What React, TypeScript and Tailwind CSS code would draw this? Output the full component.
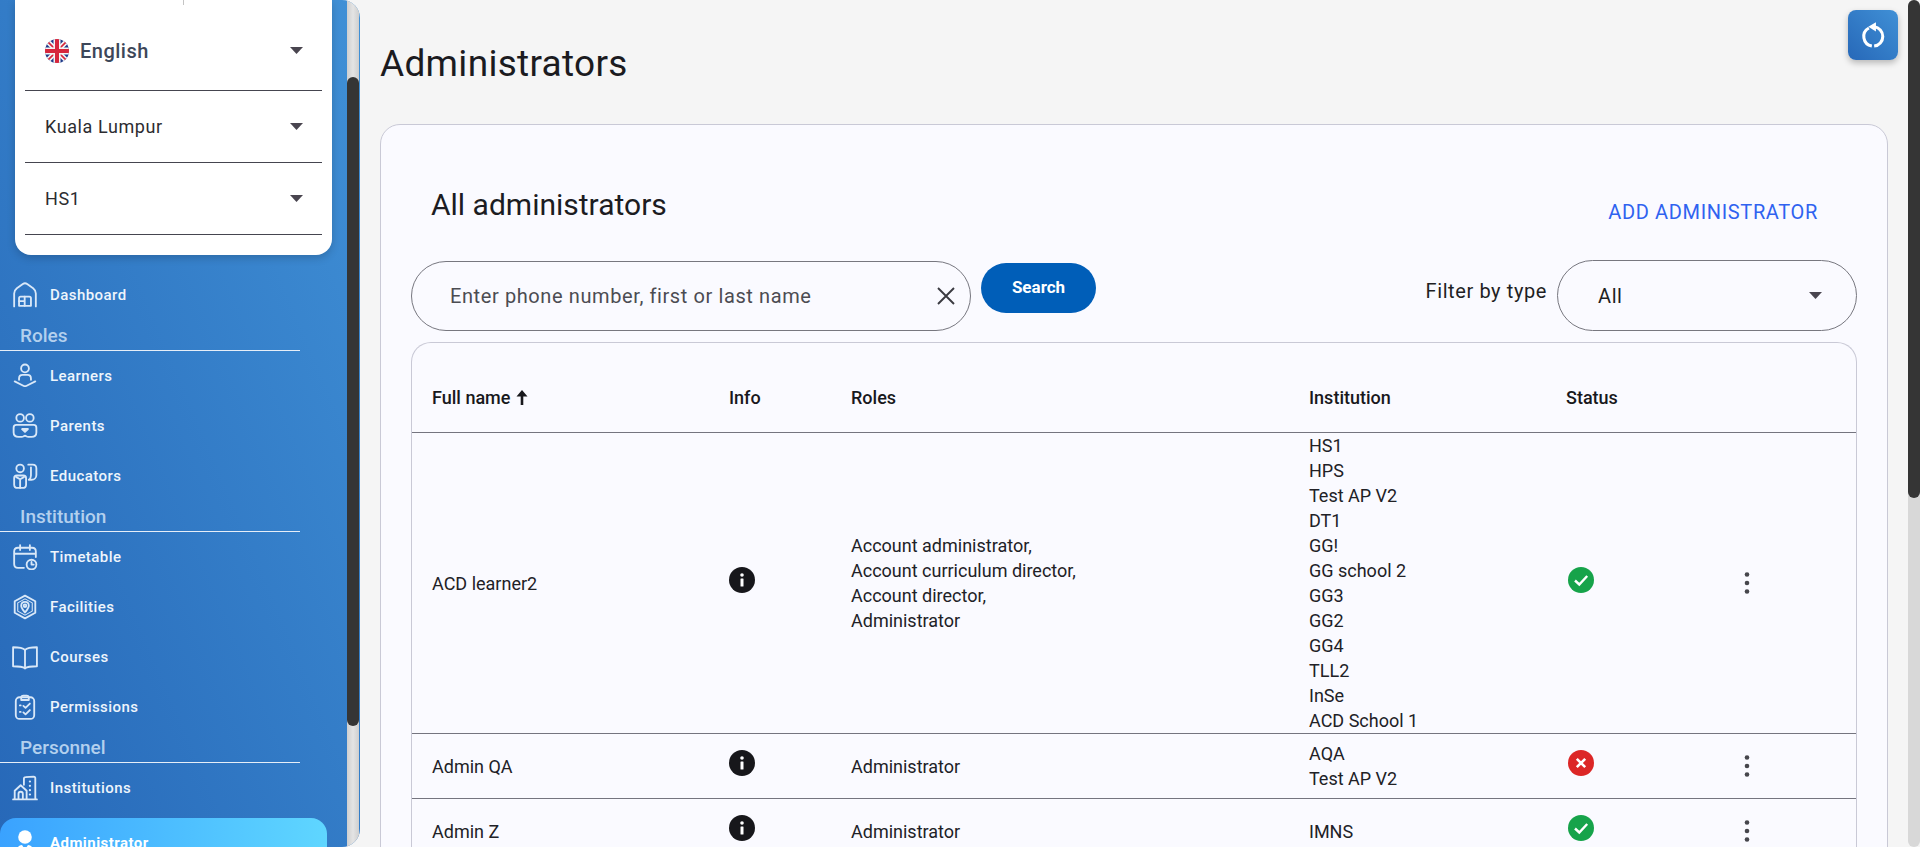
import type { ReactNode } from 'react';

const font = 'font-["Roboto",sans-serif]';

function Icon({ children }: { children: ReactNode }) {
  return (
    <svg
      viewBox="0 0 24 24"
      className="w-[26px] h-[26px] shrink-0"
      fill="none"
      stroke="#d9e8f8"
      strokeWidth="1.7"
      strokeLinecap="round"
      strokeLinejoin="round"
    >
      {children}
    </svg>
  );
}

const icons: Record<string, ReactNode> = {
  Dashboard: (
    <>
      <path d="M2 22.5V10.5C2 8.5 3 7 4.5 5.8L10 1.8C11.2 1 12.8 1 14 1.8L19.5 5.8C21 7 22 8.5 22 10.5V22.5" />
      <path d="M6.5 22V15C6.5 14 7 13.5 8 13.5H16C17 13.5 17.5 14 17.5 15V22H6.5Z" />
      <path d="M11.7 13.5V22M6.5 17.7H11.7" />
    </>
  ),
  Learners: (
    <>
      <circle cx="12" cy="5" r="3.6" />
      <path d="M6.5 15.5V14.2C6.5 12.2 8 11 9.8 11H14.2C16 11 17.5 12.2 17.5 14.2V15.5" />
      <path d="M2.5 17L10.5 21C11.5 21.5 12.5 21.5 13.5 21L21.5 17" />
    </>
  ),
  Parents: (
    <>
      <circle cx="7.5" cy="4.5" r="3.5" />
      <circle cx="16.5" cy="4.5" r="3.5" />
      <path d="M4 11H20C21.5 11 22.5 12 22.5 13.5V18C22.5 20.5 20.5 22 18 22H15C13.5 22 13 21 12 21C11 21 10.5 22 9 22H6C3.5 22 1.5 20.5 1.5 18V13.5C1.5 12 2.5 11 4 11Z" />
      <path d="M12 17.5L9.3 14.8H14.7L12 17.5Z" fill="#d9e8f8" />
    </>
  ),
  Educators: (
    <>
      <circle cx="7.5" cy="5" r="3.5" />
      <path d="M2 14C2 12.5 3 11.5 4.5 11.5H10.5C12 11.5 13 12.5 13 14V20C13 22 11.5 23 9.5 23H5.5C3.5 23 2 22 2 20V14Z" />
      <path d="M7.5 15V23M4 13L7.5 15L11 13" />
      <path d="M15 1.5H19C21 1.5 22.5 3 22.5 5V11C22.5 13.5 20.5 15.5 18 15.5H15.5C17 14.5 17.5 13 17.5 11.5V4" />
    </>
  ),
  Timetable: (
    <>
      <path d="M11 22H5.5C3.5 22 2 20.5 2 18.5V7C2 5 3.5 3.5 5.5 3.5H18.5C20.5 3.5 22 5 22 7V12" />
      <path d="M2.5 9H21.5M7.5 1V5.5M16.5 1V5.5" />
      <circle cx="18" cy="19" r="4.5" />
      <path d="M18 16.5V19H20" />
    </>
  ),
  Facilities: (
    <>
      <path d="M12 1.5L21.5 6.7V17.3L12 22.5L2.5 17.3V6.7L12 1.5Z" />
      <path d="M12 4.5L18.7 8.2V15.8L12 19.5L5.3 15.8V8.2L12 4.5Z" strokeWidth="1" />
      <path d="M12 17C10 14.5 8.5 12.8 8.5 10.8C8.5 8.8 10 7.3 12 7.3C14 7.3 15.5 8.8 15.5 10.8C15.5 12.8 14 14.5 12 17Z" />
      <circle cx="12" cy="10.8" r="1.2" />
    </>
  ),
  Courses: (
    <>
      <path d="M12 5.5C10 3.5 7.5 3 1 3V20.5C7.5 20.5 10 21 12 22.5C14 21 16.5 20.5 23 20.5V3C16.5 3 14 3.5 12 5.5Z" />
      <path d="M12 5.5V22.5" />
    </>
  ),
  Permissions: (
    <>
      <rect x="3.5" y="3" width="17" height="20" rx="3.5" />
      <path d="M8.5 5.5V3.5C8.5 2.3 9.3 1.5 10.5 1.5H13.5C14.7 1.5 15.5 2.3 15.5 3.5V5.5H8.5Z" />
      <path d="M7.3 10.5H8M7.3 16.5H8M10.5 11L12.5 12.8L16.5 8.8M10.5 17L12.5 18.8L16.5 14.8" />
    </>
  ),
  Institutions: (
    <>
      <path d="M11 9V3.5C11 2.5 11.8 2 12.5 2L20 1.5C21 1.5 21.5 2.2 21.5 3V22" />
      <path d="M2.5 22V14.5L8 9.5L13.5 14.5V22" />
      <path d="M6 22V17.5C6 16.3 7 15.5 8 15.5C9 15.5 10 16.3 10 17.5V22" />
      <path d="M1 22.5H23" />
      <path d="M16.5 6H16.6M16.5 10H16.6M16.5 14H16.6M16.5 18H16.6" strokeWidth="2" />
    </>
  ),
};

function Caret() {
  return (
    <svg viewBox="0 0 13 7" className="w-[13px] h-[7px] shrink-0" fill="#49454f">
      <path d="M0 0H13L6.5 7Z" />
    </svg>
  );
}

function UkFlag() {
  return (
    <svg viewBox="0 0 24 24" className="w-[24px] h-[24px] shrink-0 rounded-full">
      <rect width="24" height="24" fill="#1f3a8a" />
      <path d="M0 0L24 24M24 0L0 24" stroke="#f4f4f4" strokeWidth="5" />
      <path d="M0 0L24 24M24 0L0 24" stroke="#d6263c" strokeWidth="1.6" />
      <path d="M12 0V24M0 12H24" stroke="#f4f4f4" strokeWidth="7" />
      <path d="M12 0V24M0 12H24" stroke="#d6263c" strokeWidth="4" />
    </svg>
  );
}

function NavItem({ label }: { label: string }) {
  return (
    <div className="h-[50px] flex items-center">
      <div className="w-[50px] flex justify-center pr-[1px]">
        <Icon>{icons[label]}</Icon>
      </div>
      <span className="text-[15px] font-medium tracking-[0.45px] text-[#eef5fc]">{label}</span>
    </div>
  );
}

function NavHeading({ label }: { label: string }) {
  return (
    <div className="h-[31px] w-[300px] border-b border-[#e6eef8] pl-[20px] flex items-center text-[19px] font-medium leading-none text-[#b3d0ee]">
      {label}
    </div>
  );
}

function SidebarSelect({ label, first, flag }: { label: string; first?: boolean; flag?: boolean }) {
  return (
    <div
      className={`${first ? 'h-[91px] pt-[11px]' : 'h-[72px]'} mx-[10px] pl-[20px] pr-[19px] border-b border-[#45454f] flex items-center justify-between`}
    >
      <div className="flex items-center gap-[11px]">
        {flag && <UkFlag />}
        <span
          className={
            flag
              ? 'text-[20px] font-medium tracking-[0.5px] text-[#3d4759]'
              : 'text-[18px] tracking-[0.6px] text-[#2c2c30]'
          }
        >
          {label}
        </span>
      </div>
      <Caret />
    </div>
  );
}

function Sidebar() {
  return (
    <aside className="w-[360px] h-full shrink-0 flex rounded-r-[18px] overflow-hidden bg-linear-to-bl from-[#4090d6] to-[#2768b8]">
      <div className="w-[347px] shrink-0 h-full overflow-hidden">
        <div className="ml-[15px] w-[317px] h-[255px] bg-white rounded-b-[16px] shadow-[0_3px_8px_rgba(0,0,0,0.18)]">
          <div className="h-0 flex justify-center">
            <div className="w-px h-[5px] bg-[#c4c4c4] shrink-0 ml-[20px]" />
          </div>
          <SidebarSelect label="English" first flag />
          <SidebarSelect label="Kuala Lumpur" />
          <SidebarSelect label="HS1" />
        </div>
        <div className="mt-[15px]">
          <NavItem label="Dashboard" />
          <NavHeading label="Roles" />
          <NavItem label="Learners" />
          <NavItem label="Parents" />
          <NavItem label="Educators" />
          <NavHeading label="Institution" />
          <NavItem label="Timetable" />
          <NavItem label="Facilities" />
          <NavItem label="Courses" />
          <NavItem label="Permissions" />
          <NavHeading label="Personnel" />
          <NavItem label="Institutions" />
          <div className="mt-[5px] w-[327px] h-[50px] rounded-[16px] flex items-center bg-linear-to-r from-[#3aa2ff] to-[#5fd6ff]">
            <div className="w-[50px] flex justify-center">
              <svg viewBox="0 0 26 26" className="w-[26px] h-[26px]" fill="#fff">
                <circle cx="13" cy="7" r="6.8" />
                <path d="M3 26C3 20 6 15 10 15L12 18L11 26ZM23 26C23 20 20 15 16 15L14 18L15 26Z" />
              </svg>
            </div>
            <span className="text-[15px] font-bold tracking-[0.45px] text-white">Administrator</span>
          </div>
        </div>
      </div>
      <div className="w-[12px] h-full flex flex-col bg-linear-to-r from-[#cfcfcf] via-[#e4e4e4] to-[#cfcfcf] rounded-r-[16px]">
        <div className="h-[77px] shrink-0" />
        <div className="h-[649px] shrink-0 bg-[#353535] rounded-[6px]" />
      </div>
    </aside>
  );
}

type Row = {
  name: string;
  roles: string[];
  institutions: string[];
  active: boolean;
  className: string;
};

const rows: Row[] = [
  {
    name: 'ACD learner2',
    roles: ['Account administrator,', 'Account curriculum director,', 'Account director,', 'Administrator'],
    institutions: ['HS1', 'HPS', 'Test AP V2', 'DT1', 'GG!', 'GG school 2', 'GG3', 'GG2', 'GG4', 'TLL2', 'InSe', 'ACD School 1'],
    active: true,
    className: 'h-[301px]',
  },
  {
    name: 'Admin QA',
    roles: ['Administrator'],
    institutions: ['AQA', 'Test AP V2'],
    active: false,
    className: 'h-[65px]',
  },
  {
    name: 'Admin Z',
    roles: ['Administrator'],
    institutions: ['IMNS'],
    active: true,
    className: 'h-[65px]',
  },
];

const gridCols = 'grid grid-cols-[317px_122px_458px_257px_170px_1fr]';

function InfoIcon() {
  return (
    <svg viewBox="0 0 26 26" className="w-[26px] h-[26px] mb-[7px]">
      <circle cx="13" cy="13" r="13" fill="#17171b" />
      <rect x="11.5" y="11.5" width="3" height="8" rx="0.5" fill="#fff" />
      <circle cx="13" cy="8" r="1.8" fill="#fff" />
    </svg>
  );
}

function StatusIcon({ active }: { active: boolean }) {
  return (
    <svg viewBox="0 0 26 26" className="w-[26px] h-[26px] mb-[7px] ml-[2px]">
      <circle cx="13" cy="13" r="13" fill={active ? '#16a34a' : '#dc2626'} />
      {active ? (
        <path d="M7 13.5L11.3 17.5L19.2 9" fill="none" stroke="#fff" strokeWidth="2.4" />
      ) : (
        <path d="M8.8 8.8L17.2 17.2M17.2 8.8L8.8 17.2" fill="none" stroke="#fff" strokeWidth="2.6" />
      )}
    </svg>
  );
}

function Kebab() {
  return (
    <svg viewBox="0 0 22 26" className="w-[22px] h-[26px]" fill="#46464c">
      <circle cx="11" cy="4.5" r="2.3" />
      <circle cx="11" cy="13" r="2.3" />
      <circle cx="11" cy="21.5" r="2.3" />
    </svg>
  );
}

function Table() {
  return (
    <div className="mt-[11px] border border-b-0 border-[#c9c9d6] rounded-t-[20px]">
      <div className={`${gridCols} h-[90px] items-center pt-[20px] border-b border-[#74747f] text-[18px] font-medium text-[#18181c]`}>
        <div className="pl-[20px] flex items-center gap-[6px]">
          Full name
          <svg viewBox="0 0 12 15" className="w-[12px] h-[15px]" fill="#18181c">
            <path d="M6 0L11.5 6.5H7.3V15H4.7V6.5H0.5Z" />
          </svg>
        </div>
        <div>Info</div>
        <div>Roles</div>
        <div>Institution</div>
        <div>Status</div>
      </div>
      {rows.map((row) => (
        <div
          key={row.name}
          className={`${gridCols} ${row.className} items-center border-b border-[#74747f] text-[18px] leading-[25px] text-[#212126]`}
        >
          <div className="pl-[20px]">{row.name}</div>
          <InfoIcon />
          <div className={row.roles.length > 1 ? 'mb-[1px]' : ''}>
            {row.roles.map((role) => (
              <div key={role}>{role}</div>
            ))}
          </div>
          <div>
            {row.institutions.map((inst) => (
              <div key={inst}>{inst}</div>
            ))}
          </div>
          <StatusIcon active={row.active} />
          <Kebab />
        </div>
      ))}
    </div>
  );
}

export default function App() {
  return (
    <div className={`${font} h-[847px] w-full overflow-hidden flex bg-[#f5f5f5]`}>
      <Sidebar />
      <main className="flex-1 min-w-0 h-full pl-[20px] pr-[10px] overflow-hidden">
        <header className="h-[124px] flex items-start justify-between">
          <h1 className="mt-[44px] text-[37px] tracking-[0.3px] leading-[40px] text-[#1b1b1f]">Administrators</h1>
          <button className="mt-[10px] w-[50px] h-[50px] rounded-[8px] flex items-center justify-center bg-linear-to-bl from-[#4090d6] to-[#2768b8] shadow-[0_3px_6px_rgba(0,0,0,0.25)]">
            <svg viewBox="0 0 24 24" className="w-[28px] h-[28px]" fill="none" stroke="#fff" strokeWidth="2.6">
              <path d="M13 5A8.3 8.3 0 0 1 13 21.5" />
              <path d="M11 21.5A8.3 8.3 0 0 1 8.500 6" />
              <path d="M14.500 1L8 5L14.500 9Z" fill="#fff" stroke="none" />
            </svg>
          </button>
        </header>
        <section className="mr-[10px] border border-[#c9c9d6] rounded-t-[20px] bg-[#fafaff] pl-[30px] pr-[30px] h-[800px]">
          <div className="h-[135px] flex items-start justify-between pt-[62px]">
            <h2 className="ml-[20px] text-[30px] leading-[36px] text-[#1c1c22]">All administrators</h2>
            <button className="mr-[39px] mt-[13px] text-[20px] leading-[24px] tracking-[0.65px] text-[#2f62f0]">
              ADD ADMINISTRATOR
            </button>
          </div>
          <div className="flex items-start h-[71px]">
            <div className="mt-[1px] w-[560px] h-[70px] rounded-full border border-[#77777f] flex items-center pl-[38px] pr-[15px]">
              <input
                placeholder="Enter phone number, first or last name"
                className="flex-1 bg-transparent outline-none text-[20px] tracking-[0.6px] placeholder:text-[#4c4c52]"
              />
              <svg viewBox="0 0 18 18" className="w-[18px] h-[18px]" fill="none" stroke="#3a3a40" strokeWidth="1.9">
                <path d="M1 1L17 17M17 1L1 17" />
              </svg>
            </div>
            <button className="ml-[10px] mt-[3px] w-[115px] h-[50px] rounded-full bg-[#005eb8] text-[17px] font-bold text-white">
              Search
            </button>
            <div className="ml-auto flex items-start">
              <span className="mt-[18px] text-[20px] leading-[26px] tracking-[0.6px] text-[#1f1f24]">Filter by type</span>
              <div className="ml-[10px] w-[300px] h-[71px] rounded-full border border-[#77777f] flex items-center justify-between pl-[40px] pr-[34px]">
                <span className="text-[20px] tracking-[0.6px] text-[#1f1f24]">All</span>
                <Caret />
              </div>
            </div>
          </div>
          <Table />
        </section>
      </main>
      <div className="w-[12px] h-full shrink-0 bg-[#d8d8d8] rounded-[6px]">
        <div className="h-[498px] bg-[#353535] rounded-[6px]" />
      </div>
    </div>
  );
}
